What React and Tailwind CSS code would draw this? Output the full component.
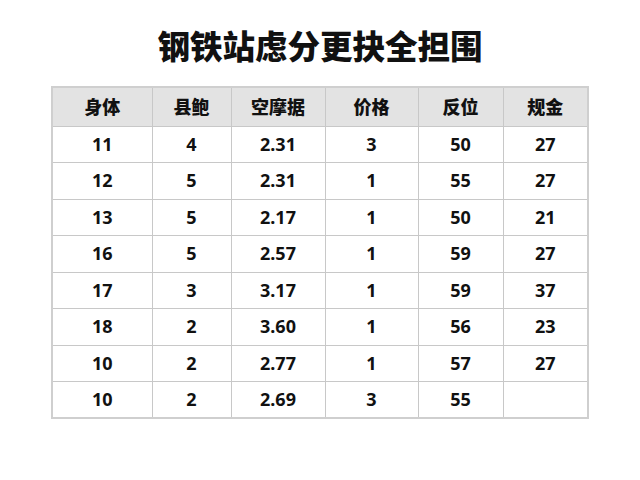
import React from "react";

const headers = ["身体", "县鲍", "空摩据", "价格", "反位", "规金"];

const rows = [
  ["11", "4", "2.31", "3", "50", "27"],
  ["12", "5", "2.31", "1", "55", "27"],
  ["13", "5", "2.17", "1", "50", "21"],
  ["16", "5", "2.57", "1", "59", "27"],
  ["17", "3", "3.17", "1", "59", "37"],
  ["18", "2", "3.60", "1", "56", "23"],
  ["10", "2", "2.77", "1", "57", "27"],
  ["10", "2", "2.69", "3", "55", ""],
];

const widths = ["w-[100px]", "w-[79px]", "w-[94px]", "w-[93px]", "w-[85px]", "w-[85px]"];

export default function App() {
  return (
    <div className="w-[640px] h-[480px] bg-white flex flex-col items-center font-['Noto_Sans','Noto_Sans_CJK_SC',sans-serif] text-[#111]">
      {/* title */}
      <h1 className="mt-[25px] text-[32.5px] leading-[40px] font-black font-['Noto_Sans_CJK_SC',sans-serif]">
        钢铁站虑分更抉全担围
      </h1>

      <table className="mt-[21px] w-[536px] table-fixed border-collapse border-2 border-[#cfcfcf]">
        <thead>
          <tr className="h-[39px] bg-[#e3e3e3]">
            {headers.map((h, i) => (
              <th
                key={i}
                className={`${widths[i]} border border-[#c8c8c8] text-[18px] font-black font-['Noto_Sans_CJK_SC',sans-serif] text-center p-0`}
              >
                {h}
              </th>
            ))}
          </tr>
        </thead>
        <tbody>
          {rows.map((r, ri) => (
            <tr key={ri} className="h-[36.5px]">
              {r.map((c, ci) => (
                <td
                  key={ci}
                  className="border border-[#c8c8c8] text-[18px] font-bold text-center p-0"
                >
                  {c}
                </td>
              ))}
            </tr>
          ))}
        </tbody>
      </table>
    </div>
  );
}
